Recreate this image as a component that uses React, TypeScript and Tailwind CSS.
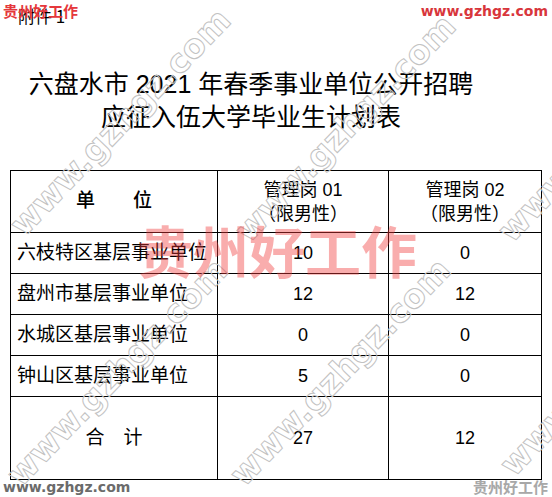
import React from "react";

const cjk = "font-['Liberation_Sans','Noto_Sans_CJK_SC',sans-serif]";

function Diag({ cls }: { cls: string }) {
  return (
    <div
      className={`pointer-events-none absolute -translate-x-1/2 -translate-y-1/2 -rotate-[46deg] whitespace-nowrap font-['DejaVu_Sans',sans-serif] text-[33px] font-bold leading-none text-transparent [-webkit-text-stroke:1px_#c2c2c2] ${cls}`}
    >
      www.gzhgz.com
    </div>
  );
}

const rows = [
  ["六枝特区基层事业单位", "10", "0"],
  ["盘州市基层事业单位", "12", "12"],
  ["水城区基层事业单位", "0", "0"],
  ["钟山区基层事业单位", "5", "0"],
];

export default function App() {
  return (
    <div className={`relative h-[497px] w-[552px] overflow-hidden bg-white text-black ${cjk}`}>
      <div className="pl-[18px] pt-[5px] font-['Noto_Sans_CJK_SC',sans-serif] text-[17px] leading-[22px]">附件 1</div>

      <div className="mt-[41px] w-[502px] text-center font-['Liberation_Sans','Noto_Sans_CJK_SC',sans-serif] text-[25px] leading-[33px]">
        <div>六盘水市 2021 年春季事业单位公开招聘</div>
        <div>应征入伍大学毕业生计划表</div>
      </div>

      <table className="ml-[10px] mt-[36px] w-[531px] table-fixed border-collapse">
        <colgroup>
          <col className="w-[207px]" />
          <col className="w-[171px]" />
          <col className="w-[153px]" />
        </colgroup>
        <tbody>
          <tr className="h-[62px]">
            <td className="border border-black text-center text-[19px] font-medium">单　　位</td>
            <td className="border border-black text-center text-[18px] leading-[24px]">
              <div>管理岗 01</div>
              <div>（限男性）</div>
            </td>
            <td className="border border-black text-center text-[18px] leading-[24px]">
              <div>管理岗 02</div>
              <div>（限男性）</div>
            </td>
          </tr>
          {rows.map((r) => (
            <tr key={r[0]} className="h-[41px]">
              <td className="border border-black pl-[6px] text-[19px]">{r[0]}</td>
              <td className="border border-black text-center text-[18px]">{r[1]}</td>
              <td className="border border-black text-center text-[18px]">{r[2]}</td>
            </tr>
          ))}
          <tr className="h-[83px]">
            <td className="border border-black text-center text-[19px]">合　计</td>
            <td className="border border-black text-center text-[18px]">27</td>
            <td className="border border-black text-center text-[18px]">12</td>
          </tr>
        </tbody>
      </table>

      {/* diagonal watermarks */}
      <Diag cls="left-[120px] top-[122px]" />
      <Diag cls="left-[345px] top-[128px]" />
      <Diag cls="left-[608px] top-[128px]" />
      <Diag cls="left-[117px] top-[372px]" />
      <Diag cls="left-[340px] top-[372px]" />
      <Diag cls="left-[610px] top-[362px]" />

      {/* big center watermark */}
      <div className="pointer-events-none absolute left-[137px] top-[214px] whitespace-nowrap font-['Noto_Sans_CJK_SC',sans-serif] text-[56px] font-bold leading-[70px] text-[rgba(240,60,60,0.42)]">
        贵州好工作
      </div>

      {/* corner watermarks */}
      <div className="absolute left-[3px] top-[1px] font-['Noto_Sans_CJK_SC',sans-serif] text-[15px] font-bold leading-[20px] text-[#e5383c]">
        贵州好工作
      </div>
      <div className="absolute right-[4px] top-[2px] font-['DejaVu_Sans',sans-serif] text-[14px] font-bold leading-[18px] text-[#d8363c]">
        www.gzhgz.com
      </div>
      <div className="absolute bottom-[1px] left-[3px] font-['DejaVu_Sans',sans-serif] text-[14px] font-bold leading-[18px] text-[#6b6b6b]">
        www.gzhgz.com
      </div>
      <div className="absolute bottom-[0px] right-[4px] font-['Noto_Sans_CJK_SC',sans-serif] text-[15px] font-bold leading-[20px] text-[#a8a8a8]">
        贵州好工作
      </div>
    </div>
  );
}
